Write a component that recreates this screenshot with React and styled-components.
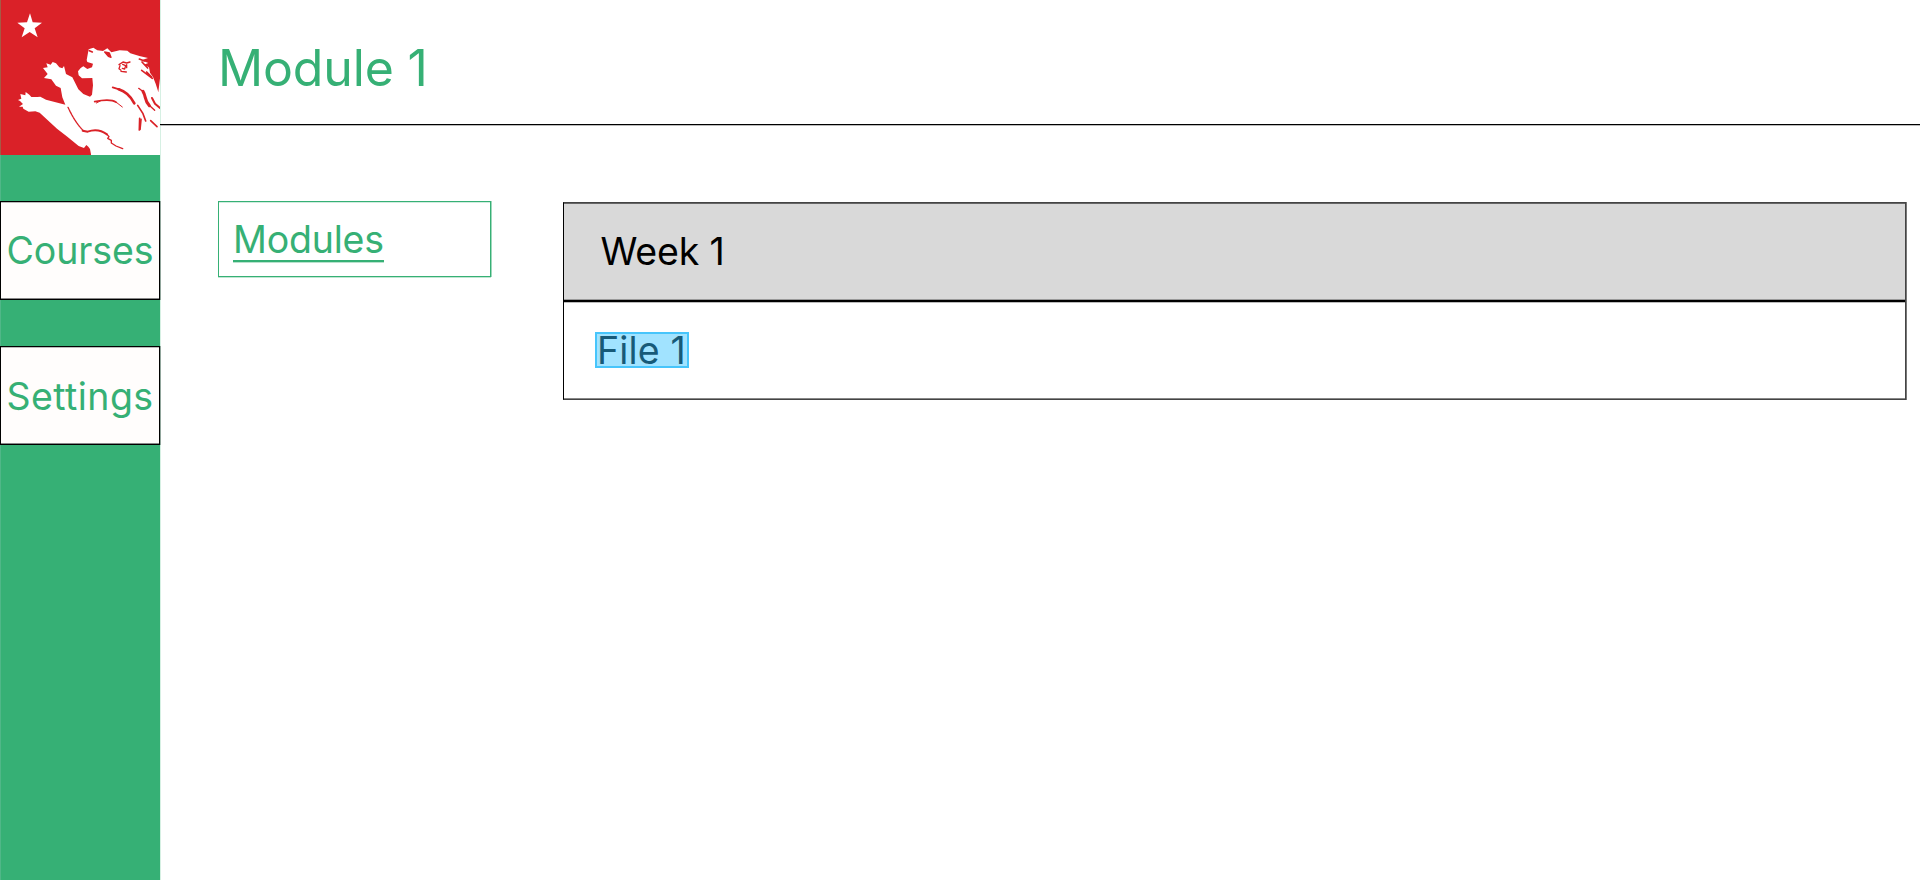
import React from 'react';
import styled, { createGlobalStyle } from 'styled-components';

const GREEN = '#36b075';

const GlobalStyle = createGlobalStyle`
  *, *::before, *::after { box-sizing: border-box; }
  body { margin: 0; background: #fff; font-family: Inter, "Liberation Sans", sans-serif; }
`;

const Page = styled.div`
  display: flex;
  height: 880px;
  overflow: hidden;
`;

const Sidebar = styled.nav`
  flex: none;
  width: 160px;
  display: flex;
  flex-direction: column;
  background: ${GREEN};
  box-shadow: inset 1px 0 #50b788, 1px 0 #d6f0e3;
`;

const Logo = styled.svg`
  display: block;
  width: 160px;
  height: 155px;
  margin-bottom: 46px;
`;

const NavButton = styled.a`
  display: flex;
  justify-content: center;
  height: 99px;
  margin-bottom: 46px;
  border: 1px solid #000;
  box-shadow: inset 0 1px #bbb, inset 0 -1px #888, 1px 0 #91a69c;
  background: #fffdfc;
  color: ${GREEN};
  font-size: 37.5px;
  letter-spacing: ${(p) => p.$tracking};
  line-height: ${(p) => p.$leading};
  white-space: nowrap;
`;

const Main = styled.main`
  flex: 1;
  min-width: 0;
  display: flex;
  flex-direction: column;
`;

const Header = styled.header`
  height: 125px;
  padding: 38px 0 0 58px;
  border-bottom: 1px solid #000;
  box-shadow: 0 1px #bbb;
`;

const Title = styled.h1`
  margin: 0;
  color: ${GREEN};
  font-size: 50px;
  font-weight: 400;
  letter-spacing: -0.15px;
  line-height: 60px;
`;

const Content = styled.div`
  display: flex;
  align-items: flex-start;
  padding: 76px 14px 0 58px;
`;

const ModuleNav = styled.div`
  flex: none;
  width: 273px;
  height: 76px;
  margin-right: 72px;
  padding: 13px 14px;
  border: 1px solid ${GREEN};
  box-shadow: inset 0 1px #d0ecdf, 0 1px #c0e6d2, 1px 0 #a0d8bc;
`;

const ModuleLink = styled.a`
  display: inline-block;
  height: 47px;
  border-bottom: 2px solid ${GREEN};
  box-shadow: 0 1px #b8e2cd;
  color: ${GREEN};
  font-size: 37.5px;
  letter-spacing: -0.2px;
  line-height: 49px;
`;

const Panel = styled.section`
  flex: 1;
  height: 198px;
  margin-top: 1px;
  border: 1px solid #444;
  border-left-color: #000;
  box-shadow: inset 0 1px #666, inset 0 -1px #888, 1px 0 #777;
`;

const PanelHeader = styled.div`
  height: 99px;
  padding-left: 36.5px;
  border-bottom: 2px solid #000;
  box-shadow: inset 0 1px #666, inset 0 -1px #999, 0 1px #bbb;
  background: #d9d9d9;
  color: #000;
  font-size: 37.5px;
  letter-spacing: -0.2px;
  line-height: 98px;
`;

const PanelRow = styled.div`
  padding: 30px 0 0 31px;
`;

const FileLink = styled.a`
  display: block;
  width: 94px;
  height: 36px;
  border: 2px solid #47c5fb;
  background: #a1e3ff;
  color: #175a78;
  font-size: 37.5px;
  letter-spacing: 0.15px;
  line-height: 33px;
  white-space: nowrap;
`;

function LionLogo() {
  return (
    <Logo viewBox="0 0 480 465" preserveAspectRatio="none" aria-hidden="true">
      <defs>
        <filter id="soften" x="0" y="0" width="1" height="1">
          <feGaussianBlur stdDeviation="1.3" />
        </filter>
      </defs>
      <rect width="480" height="465" fill="#da2128" />
      <g filter="url(#soften)">
        <path fill="#fff" d="M90 40l8 27 28 1-22 17 9 27-24-16-24 16 9-27-22-17 29-1z" />
        <path
          fill="#fff"
          d="M273 475V463L270 447 265 440 259 435 252 444 236 438 202 410 171 386 119 338 106 334 86 335 70 326 68 320 57 320 69 312 60 303 54 300 64 296 61 282 76 286 77 276 88 284 94 291 112 291 121 290 138 299 196 314 187 292 182 264 168 257 154 238 132 234 143 222 129 204 143 202 139 190 152 194 158 186 168 190 178 202 187 205 192 198 198 222 217 232 235 268 250 282 270 290 276 284 279 256 277 234 246 235 236 226 234 214 242 204 250 199 262 207 276 202 279 191 262 186 260 180 266 148 280 143 292 151 309 153 322 145 334 157 359 151 382 152 391 160 418 168 444 174 424 181 445 189 431 194 447 202 450 218 459 231 467 251 475 276 480 235H490V475Z"
        />
        <g fill="none" stroke="#da2128" strokeLinecap="round" strokeLinejoin="round">
          <path strokeWidth="5" d="M268 152l9 4" />
          <path fill="#da2128" strokeWidth="4" d="M314 156l14 3 5 13-8-3z" />
          <path strokeWidth="4" d="M357 194l12-8 11 3 10-3M360 197l-3 9 6 5M368 193l9 4-3 10-7-2M380 194v9M363 214l16 2" />
          <path strokeWidth="5" d="M418 177l15 6M426 186l17 18M425 211l12 9 20 15M440 216l15 15" />
          <path strokeWidth="5" d="M284 305c24-5 50-8 65 2" />
          <path strokeWidth="3" d="M289 309l12-6M349 307l18 14" />
          <path strokeWidth="5" d="M338 262l22 7" />
          <path strokeWidth="8" d="M356 268c20 6 36 21 47 42" />
          <path strokeWidth="4" d="M416 265l12 9" />
          <path strokeWidth="9" d="M429 274c10 16 4 28 19 43" />
          <path strokeWidth="4" d="M446 314l18 17" />
          <path strokeWidth="6" d="M456 294l9 17 15 13" />
          <path strokeWidth="5" d="M413 316l16 25 8 22M423 358l-3 30" />
          <path strokeWidth="5" d="M419 355l-1 35M452 362l19 18" />
          <path strokeWidth="4" strokeDasharray="7 2" d="M204 322c10 21 23 47 47 71" />
          <path strokeWidth="6" d="M248 392l15 3c21-8 43-3 58 8" />
          <path strokeWidth="4" d="M321 403l6 7-4 5 11 6v8l14 9 20 8" />
        </g>
      </g>
      <rect width="3" height="465" fill="#a55a45" />
    </Logo>
  );
}

export default function App() {
  return (
    <>
      <GlobalStyle />
      <Page>
        <Sidebar>
          <LionLogo />
          <NavButton $tracking="-0.1px" $leading="97px">Courses</NavButton>
          <NavButton $tracking="0.45px" $leading="99px">Settings</NavButton>
        </Sidebar>
        <Main>
          <Header>
            <Title>Module 1</Title>
          </Header>
          <Content>
            <ModuleNav>
              <ModuleLink>Modules</ModuleLink>
            </ModuleNav>
            <Panel>
              <PanelHeader>Week 1</PanelHeader>
              <PanelRow>
                <FileLink>File 1</FileLink>
              </PanelRow>
            </Panel>
          </Content>
        </Main>
      </Page>
    </>
  );
}
